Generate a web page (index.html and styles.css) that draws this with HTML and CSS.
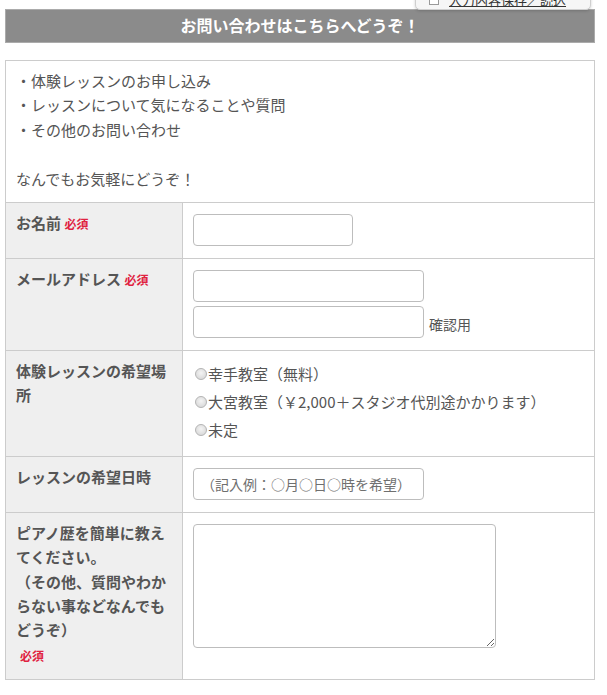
FILE: index.html
```html
<!DOCTYPE html>
<html lang="ja">
<head>
<meta charset="utf-8">
<title>お問い合わせ</title>
<link rel="stylesheet" href="styles.css">
</head>
<body>
<div class="page">
  <div class="save-pop">
    <span class="save-box"></span>
    <a class="save-link" href="#">入力内容保存／読込</a>
  </div>
  <h2 class="title">お問い合わせはこちらへどうぞ！</h2>
  <table class="form">
    <colgroup><col class="col-label"><col class="col-field"></colgroup>
    <tr>
      <td class="intro" colspan="2">
        ・体験レッスンのお申し込み<br>
        ・レッスンについて気になることや質問<br>
        ・その他のお問い合わせ<br>
        <br>
        なんでもお気軽にどうぞ！
      </td>
    </tr>
    <tr>
      <th class="label">お名前 <span class="req">必須</span></th>
      <td class="field"><input class="txt txt-name" type="text"></td>
    </tr>
    <tr>
      <th class="label">メールアドレス <span class="req">必須</span></th>
      <td class="field">
        <div class="row"><input class="txt txt-mail" type="text"></div>
        <div class="row row-gap"><input class="txt txt-mail" type="text"><span class="note">確認用</span></div>
      </td>
    </tr>
    <tr>
      <th class="label">体験レッスンの希望場所</th>
      <td class="field field-radio">
        <label class="opt"><input class="rad" type="radio" name="place">幸手教室（無料）</label>
        <label class="opt"><input class="rad" type="radio" name="place">大宮教室（￥2,000＋スタジオ代別途かかります）</label>
        <label class="opt"><input class="rad" type="radio" name="place">未定</label>
      </td>
    </tr>
    <tr>
      <th class="label">レッスンの希望日時</th>
      <td class="field"><input class="txt txt-mail" type="text" placeholder="（記入例：○月○日○時を希望）"></td>
    </tr>
    <tr>
      <th class="label label-last">ピアノ歴を簡単に教えてください。<br>（その他、質問やわからない事などなんでもどうぞ）<br><span class="req req-block">必須</span></th>
      <td class="field"><textarea class="area"></textarea></td>
    </tr>
  </table>
</div>
</body>
</html>
```

FILE: styles.css
```css
html, body {
  margin: 0;
  padding: 0;
  background: #fff;
}
body {
  font-family: "Noto Sans CJK JP", "Noto Sans", sans-serif;
  color: #555;
  font-size: 15px;
}
.page {
  position: relative;
  width: 590px;
  padding: 9px 0 0 5px;
}
.save-pop {
  position: absolute;
  top: -10px;
  left: 415px;
  width: 176px;
  height: 20px;
  background: #f6f6f6;
  border: 1px solid #cfcfcf;
  border-radius: 0 0 5px 5px;
  box-shadow: 0 1px 3px rgba(0,0,0,0.18);
  display: flex;
  align-items: center;
  gap: 10px;
  padding-left: 13px;
  box-sizing: border-box;
  z-index: 2;
  overflow: hidden;
}
.save-box {
  width: 8px;
  height: 8px;
  border: 1px solid #999;
  background: #fff;
}
.save-link {
  font-size: 13px;
  color: #333;
  text-decoration: underline;
  line-height: 16px;
}
.title {
  margin: 0;
  height: 34px;
  box-sizing: border-box;
  background: #8b8b8b;
  border: 1px solid #ababab;
  color: #fff;
  font-size: 16px;
  font-weight: bold;
  text-align: center;
  line-height: 31px;
}
.form {
  margin-top: 17px;
  width: 590px;
  border-collapse: collapse;
  table-layout: fixed;
}
.col-label {
  width: 177px;
}
.form td, .form th {
  border: 1px solid #ccc;
  vertical-align: top;
}
.intro {
  padding: 8px 10px 11px;
  line-height: 24.4px;
  font-size: 15px;
  color: #555;
}
.label {
  background: #efefef;
  padding: 8px 10px 10px;
  text-align: left;
  font-weight: bold;
  font-size: 15px;
  line-height: 24.3px;
  color: #555;
}
.label-last {
  padding-bottom: 11px;
}
.req {
  color: #e0223f;
  font-size: 12px;
  font-weight: bold;
}
.req-block {
  display: inline-block;
  margin: 1px 0 0 4px;
}
.field {
  padding: 11px 10px 12px;
  background: #fff;
}
.field-radio {
  padding-bottom: 10px;
}
.row {
  display: flex;
  align-items: center;
}
.row-gap {
  margin-top: 4px;
}
.txt {
  display: block;
  flex-shrink: 0;
  height: 32px;
  box-sizing: border-box;
  border: 1px solid #bdbdbd;
  border-radius: 4px;
  background: #fff;
  margin: 0;
  padding: 0 7px;
  font-family: "Noto Sans CJK JP", sans-serif;
  font-size: 14px;
  color: #555;
}
.txt::placeholder {
  color: #6f6f6f;
}
.txt-name {
  width: 160px;
}
.txt-mail {
  width: 231px;
}
.note {
  margin-left: 5px;
  margin-top: 4px;
  font-size: 14px;
  color: #555;
  white-space: nowrap;
}
.opt {
  display: flex;
  align-items: center;
  line-height: 24px;
  margin-bottom: 4px;
  font-size: 15px;
  color: #555;
  white-space: nowrap;
}
.rad {
  appearance: none;
  -webkit-appearance: none;
  flex-shrink: 0;
  width: 12px;
  height: 12px;
  margin: 0 1px 0 2px;
  border: 1px solid #b5b5b5;
  border-radius: 50%;
  background: radial-gradient(circle at 50% 40%, #f4f4f4 0%, #dcdcdc 70%, #cfcfcf 100%);
  box-sizing: border-box;
}
.area {
  display: block;
  width: 303px;
  height: 124px;
  box-sizing: border-box;
  border: 1px solid #bdbdbd;
  border-radius: 4px;
  margin: 0;
  resize: both;
}
```
